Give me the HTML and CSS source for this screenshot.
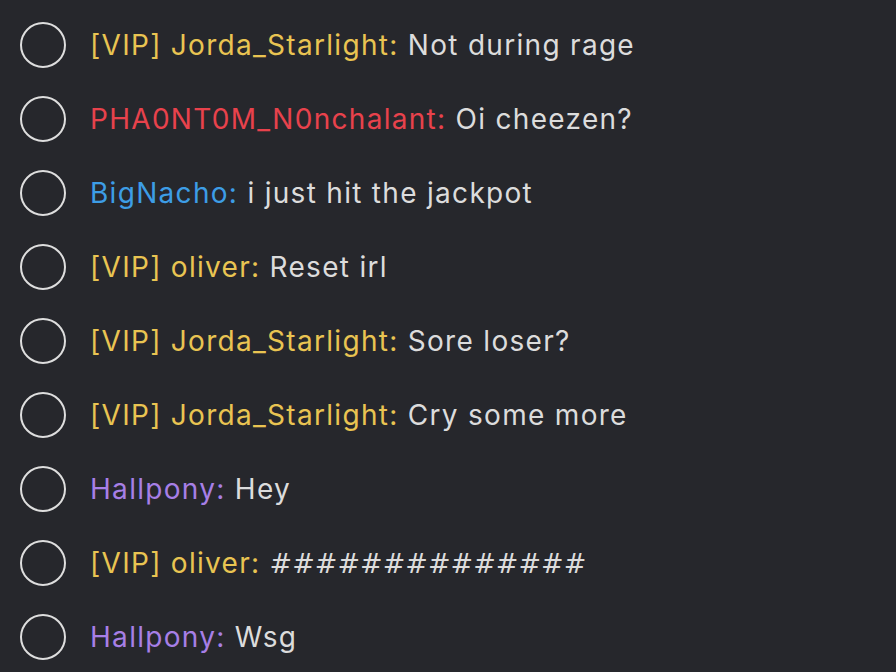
FILE: index.html
```html
<!DOCTYPE html>
<html>
<head>
<meta charset="utf-8">
<link rel="stylesheet" href="styles.css">
</head>
<body>
<div class="chat">
  <div class="row"><span class="dot"></span><p class="msg"><span class="name vip">[VIP] Jorda_Starlight:</span> Not during rage</p></div>
  <div class="row"><span class="dot"></span><p class="msg"><span class="name red">PHA0NT0M_N0nchalant:</span> Oi cheezen?</p></div>
  <div class="row"><span class="dot"></span><p class="msg"><span class="name blue">BigNacho:</span> i just hit the jackpot</p></div>
  <div class="row"><span class="dot"></span><p class="msg"><span class="name vip">[VIP] oliver:</span> Reset irl</p></div>
  <div class="row"><span class="dot"></span><p class="msg"><span class="name vip">[VIP] Jorda_Starlight:</span> Sore loser?</p></div>
  <div class="row"><span class="dot"></span><p class="msg"><span class="name vip">[VIP] Jorda_Starlight:</span> Cry some more</p></div>
  <div class="row"><span class="dot"></span><p class="msg"><span class="name purple">Hallpony:</span> Hey</p></div>
  <div class="row"><span class="dot"></span><p class="msg"><span class="name vip">[VIP] oliver:</span> <span class="hashes">##############</span></p></div>
  <div class="row"><span class="dot"></span><p class="msg"><span class="name purple">Hallpony:</span> Wsg</p></div>
</div>
</body>
</html>
```
FILE: styles.css
```css
html, body {
  margin: 0;
  padding: 0;
  background: #26272c;
  width: 896px;
  height: 672px;
  overflow: hidden;
}
.chat {
  display: flex;
  flex-direction: column;
  gap: 26px;
  padding: 21px 0 0 20px;
  font-family: Inter, sans-serif;
}
.row {
  display: flex;
  align-items: center;
  gap: 24px;
  height: 48px;
}
.dot {
  flex: none;
  width: 42px;
  height: 42px;
  border: 2px solid #dedede;
  border-radius: 50%;
}
.msg {
  margin: 0;
  font-size: 28px;
  line-height: 48px;
  letter-spacing: 1.3px;
  color: #dcdcdc;
  white-space: nowrap;
}
.hashes {
  font-family: "DejaVu Sans", sans-serif;
  font-size: 27px;
  letter-spacing: 0;
}
.vip { color: #e9c452; }
.red { color: #e8424c; }
.blue { color: #3d9de6; }
.purple { color: #a77fe6; }
```
